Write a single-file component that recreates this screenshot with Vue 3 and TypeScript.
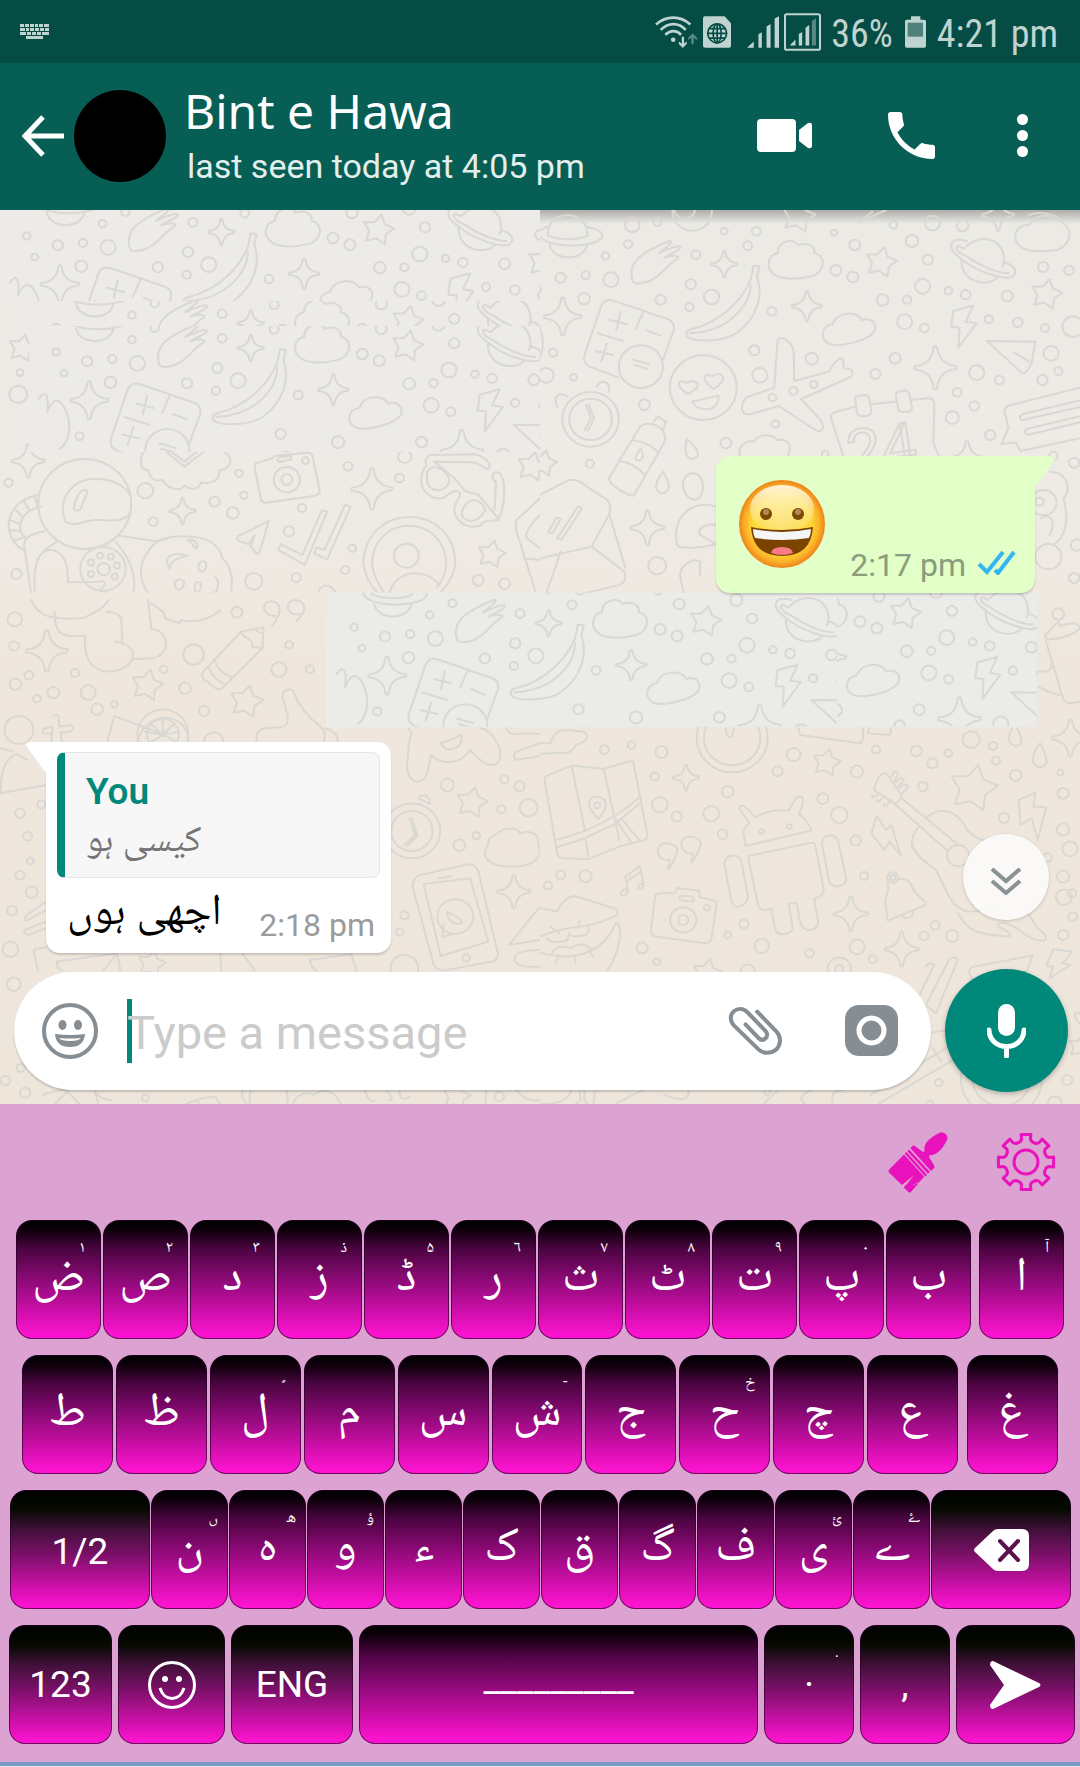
<script setup lang="ts">
interface Key {
  label: string
  name?: string
  hint?: string
  w: number
  fn?: boolean
  apart?: boolean
  icon?: 'smile' | 'back' | 'send'
}
type Dot = [number, number, number]

const letter = (w: number) => (s: string): Key => {
  const [label, hint] = s.split(' ')
  return { label, hint, w }
}

const rows: { id: string; keys: Key[] }[] = [
  {
    id: 'r1',
    keys: [
      ...['ض ۱', 'ص ۲', 'د ۳', 'ز ذ', 'ڈ ۵', 'ر ٦', 'ث ۷', 'ٹ ۸', 'ت ۹', 'پ ۰', 'ب'].map(letter(85)),
      { label: 'ا', hint: 'آ', w: 85, apart: true },
    ],
  },
  {
    id: 'r2',
    keys: [
      ...['ط', 'ظ', 'ل \u00a0\u064b', 'م', 'س', 'ش -', 'ج', 'ح خ', 'چ', 'ع'].map(letter(91)),
      { label: 'غ', w: 91, apart: true },
    ],
  },
  {
    id: 'r3',
    keys: [
      { label: '1/2', w: 140, fn: true },
      ...['ن ں', 'ہ ھ', 'و ؤ', 'ء', 'ک', 'ق', 'گ', 'ف', 'ی ئ', 'ے ۓ'].map(letter(77)),
      { label: '', name: 'Backspace', w: 140, fn: true, icon: 'back' },
    ],
  },
  {
    id: 'r4',
    keys: [
      { label: '123', w: 103, fn: true },
      { label: '', name: 'Emoji', w: 107, fn: true, icon: 'smile' },
      { label: 'ENG', w: 122, fn: true },
      { label: '_________', name: 'Space', w: 399 },
      { label: '·', name: 'Full stop', hint: '.', w: 90, fn: true },
      { label: ',', w: 90, fn: true },
      { label: '', name: 'Send', w: 119, fn: true, icon: 'send' },
    ],
  },
]

/* Wallpaper doodles: every layer is one path built from small shapes. */
const circle = ([x, y, r]: Dot) => `M${x - r},${y}a${r},${r} 0 1 0 ${2 * r},0a${r},${r} 0 1 0 ${-2 * r},0`
const sparkle = ([x, y, r]: Dot) => {
  const q = r * 0.16
  const t = r * 0.08
  return `M${x - t},${y - r}Q${x},${y - r - t} ${x + t},${y - r}Q${x + q},${y - q} ${x + r},${y - t}Q${x + r},${y + t} ${x + r - t},${y + t}Q${x + q},${y + q} ${x + t},${y + r}Q${x},${y + r + t} ${x - t},${y + r}Q${x - q},${y + q} ${x - r},${y + t}Q${x - r},${y - t} ${x - r + t},${y - t}Q${x - q},${y - q} ${x - t},${y - r}Z`
}
const star = ([x, y, r]: Dot) => {
  const pts = Array.from({ length: 10 }, (_, i) => {
    const a = (i * 36 - 78) * (Math.PI / 180)
    const d = i % 2 ? r * 0.55 : r
    return `${(x + d * Math.cos(a)).toFixed(1)},${(y + d * Math.sin(a)).toFixed(1)}`
  })
  return `M${pts.join('L')}Z`
}
const layer = (dots: Dot[], sparks: Dot[], stars: Dot[], extra: string) =>
  [...dots.map(circle), ...sparks.map(sparkle), ...stars.map(star), extra].join('')

const sky = layer(
  [
    [268, 60, 21], [340, 52, 11], [256, 118, 12], [190, 153, 11], [60, 218, 15], [133, 211, 12], [206, 224, 22],
    [128, 281, 17], [350, 284, 15], [438, 238, 15], [498, 276, 22], [434, 306, 12], [452, 149, 13], [603, 122, 13],
    [535, 78, 10], [628, 79, 13], [673, 319, 13], [859, 196, 16], [908, 216, 16], [914, 120, 16], [854, 83, 9],
    [1026, 60, 11], [1080, 108, 18], [1140, 54, 22], [1227, 62, 17], [1126, 164, 15], [1111, 244, 22], [1186, 257, 11],
    [1236, 269, 14], [995, 285, 17], [1066, 284, 12], [1059, 350, 22], [1116, 369, 13], [1303, 343, 12], [1387, 352, 14],
    [1357, 273, 16], [1461, 186, 15], [1536, 196, 14], [1466, 369, 12], [1548, 365, 31], [1484, 445, 22], [1268, 503, 22],
    [1334, 525, 13], [1459, 525, 15], [1505, 499, 12], [974, 507, 15], [1031, 460, 16], [789, 461, 18], [638, 511, 22],
    [622, 436, 15], [38, 443, 12], [293, 485, 64], [-7, 253, 10], [-30, 190, 11],
  ],
  [[535, 178, 38], [775, 303, 44], [66, 335, 55], [1148, 488, 62]],
  [[990, 172, 47], [1470, 268, 47]],
  'M22,92C20,10 140,10 138,92M22,66C-30,80 0,120 90,122C190,120 210,80 138,66M22,92C60,106 110,106 138,92M28,120C40,170 125,170 137,120' +
    'M270,230C250,170 300,140 375,108C395,108 360,130 345,145C365,135 410,115 408,128C400,140 370,150 360,158C380,150 405,150 400,160C370,175 345,225 305,232C290,236 275,236 270,230Z' +
    'M620,182L637,184L630,215C650,270 630,340 570,385C530,410 460,412 430,398C420,385 425,375 440,373C530,350 590,280 612,222ZM612,238C610,300 550,380 435,385' +
    'M690,145C690,110 735,95 750,120C780,110 800,125 797,145C830,150 830,200 790,213C750,225 700,225 680,208C655,190 660,150 690,145Z' +
    'M1232,130C1270,85 1345,95 1347,160C1350,170 1345,180 1342,184M1224,168C1224,240 1310,245 1330,215M1240,108C1190,95 1180,125 1215,155C1270,205 1350,225 1372,215C1390,200 1375,178 1345,172M1228,130C1200,110 1205,140 1235,152C1280,185 1330,205 1362,205' +
    'M850,358C860,320 920,315 935,345C965,335 980,360 970,380C950,410 870,425 845,418C810,410 815,360 850,358Z' +
    'M1200,318L1258,302L1236,350L1267,355L1215,428L1218,368L1194,366Z' +
    'M228,518L145,485Q122,474 130,448L178,302Q188,280 212,286L370,342Q394,352 388,376L358,462M202,345L252,358M234,322L222,376M162,438L212,450M194,416L178,470M310,376L350,392M300,320L278,372M168,385L240,408M275,480L312,492M270,464L316,478' +
    'M1298,408L1438,410L1428,470Q1410,520 1392,497ZM1375,442L1420,470M-80,330C-60,300 -50,320 -56,370C-40,330 -20,320 0,370C20,420 0,470 -20,480',
)

const town = layer(
  [
    [474, 548, 97], [147, 643, 82], [147, 643, 62], [675, 578, 11], [736, 558, 12], [795, 538, 11], [684, 657, 11],
    [303, 599, 16], [540, 714, 16], [97, 517, 10], [18, 511, 22], [145, 776, 12], [340, 1082, 26], [1211, 562, 13],
    [1261, 603, 14], [1197, 638, 19], [1307, 690, 15], [1491, 752, 12], [1551, 773, 15], [1558, 1020, 17],
    [1551, 1119, 15], [828, 748, 10], [1462, 893, 38], [1450, 890, 12], [1476, 1055, 38], [442, 20, 57], [420, 12, 30],
  ],
  [[312, 968, 50], [1240, 760, 50], [1330, 30, 46]],
  [[750, 34, 50], [10, 775, 40]],
  'M430,568C390,540 400,520 428,534C445,520 470,535 452,552ZM505,552C465,525 475,500 502,514C525,495 545,520 520,540ZM442,590L518,572C525,620 460,625 442,590Z' +
    'M690,405C700,390 738,410 737,450L738,528L840,500C850,470 880,450 880,465L882,490C920,490 910,515 890,522L758,582L815,645C830,670 815,685 800,675L693,603L610,628C580,630 580,600 600,577L680,548Z' +
    'M134,600L148,640L130,676M142,600L157,642L138,678M50,605C35,570 60,560 80,575M165,545C180,520 205,530 200,560' +
    'M200,820L290,665C310,645 370,660 362,710L272,872C260,875 200,840 200,820ZM268,705C300,710 330,725 345,745M232,768C260,772 290,790 305,812M330,650L342,634L366,650L358,672M292,732C270,760 275,768 290,766C302,760 300,745 292,732Z' +
    'M425,702C470,740 465,760 440,762C418,755 422,730 425,702ZM358,800C380,840 380,862 352,865C325,855 340,820 358,800ZM442,805C485,805 480,880 450,885C410,880 400,810 442,805Z' +
    'M580,752C575,720 600,705 620,710C640,680 680,690 688,705C730,700 730,730 720,752' +
    'M880,752L845,640Q842,628 856,622L915,605M958,598L1035,590M1078,584L1130,580Q1145,582 1145,600L1142,712L1158,752M915,580Q915,572 925,572L945,570Q954,572 956,582L962,618Q962,630 950,632L932,634Q922,632 920,622ZM1033,570Q1033,560 1042,560L1062,556Q1070,558 1072,566L1080,608Q1080,618 1070,620L1052,620Q1042,620 1040,612Z' +
    'M1568,548L1360,602Q1345,610 1350,625L1360,668L1340,718L1380,712L1395,738L1568,700M1568,586L1400,628Q1388,636 1398,646L1568,606M1568,634L1412,672Q1402,682 1416,690L1568,652' +
    'M0,870L70,832Q92,818 115,830L195,885Q208,900 202,925L150,1025L0,1060M60,1040L20,1160M150,1025L245,1100Q255,1130 230,1140L130,1165M202,930L248,1090M110,905L122,910L62,1005L50,1000ZM48,938L60,942L36,985L24,982Z' +
    'M512,905C440,880 380,940 398,1020C410,1035 470,1028 512,1018M512,960C480,955 455,970 465,990L512,1018M465,1110L465,1070C450,1055 400,1080 408,1120C415,1160 420,1180 430,1190M1480,800C1530,800 1545,850 1520,880C1540,960 1520,1000 1490,1020M1456,940C1480,920 1500,950 1480,990' +
    'M925,52L1005,15M925,52L965,20M1420,30C1440,20 1500,20 1520,55C1550,80 1540,120 1500,135C1450,142 1400,140 1385,115C1370,80 1390,60 1420,60C1440,30 1470,25 1490,42',
)

const spaceman = layer(
  [
    [246, 897, 135], [299, 1092, 66], [301, 1093, 18], [291, 1052, 9], [322, 1055, 9], [340, 1082, 9], [333, 1115, 9],
    [264, 1107, 9], [264, 1072, 9], [25, 833, 12], [422, 857, 23], [445, 950, 13], [623, 890, 15], [676, 924, 17],
    [708, 871, 11], [694, 805, 11], [833, 824, 38], [833, 824, 16], [887, 767, 10], [1010, 784, 13], [1160, 819, 13],
    [1175, 755, 19], [877, 909, 12], [839, 979, 15], [1023, 1030, 11], [1002, 1095, 12], [860, 1118, 13], [737, 1129, 25],
    [1180, 1052, 36], [1389, 1126, 16], [1465, 1136, 16], [48, 1107, 15], [41, 1185, 12], [789, 1200, 24], [858, 1195, 22],
    [53, 568, 26], [58, 503, 10],
  ],
  [[82, 768, 48], [530, 918, 38], [1080, 852, 60]],
  [[1427, 1048, 42], [1545, 785, 45], [65, 430, 42]],
  'M190,950C165,880 210,825 270,822C330,820 360,840 378,870M190,950C220,970 250,940 300,945C340,950 370,945 380,920M215,905C220,870 240,850 250,855C260,860 240,890 235,912C225,920 212,918 215,905Z' +
    'M110,870C50,880 20,930 26,970C30,1005 50,1025 68,1035M120,905C70,915 50,950 62,985L75,1000M100,872L110,905M70,890L86,918M45,915L66,935M30,945L58,958M28,975L60,978M40,1008L66,998M130,978C80,990 70,1000 70,1020L95,1200M105,1200C90,1080 110,1030 155,1035C200,1050 195,1100 198,1132L290,1130C310,1125 310,1140 288,1158C320,1160 325,1180 315,1200M335,1010C380,1060 400,1120 385,1170L362,1190M345,992L450,1008L485,1002M130,1035L165,1010' +
    'M430,1040C450,1000 500,990 550,995C600,995 640,1020 645,1060C680,1090 680,1150 660,1200M430,1040C400,1080 405,1130 430,1165L440,1200M486,1075C480,1050 510,1040 545,1052C520,1060 500,1060 492,1092ZM578,1095C570,1075 590,1060 598,1075C602,1095 590,1105 578,1095ZM510,1148C500,1125 525,1115 534,1130C536,1150 520,1160 510,1148ZM566,1155C562,1135 575,1125 582,1135C586,1155 575,1170 566,1155ZM600,1172L628,1160Q640,1130 625,1115M545,1005C570,1000 580,1025 570,1030Z' +
    'M485,742L535,785L590,742M500,742L535,770L570,742M415,742C400,780 415,795 432,797C435,825 455,830 470,824C490,855 525,860 535,842C560,860 580,850 584,832C620,840 640,820 636,797C680,790 675,750 650,742' +
    'M760,770L742,775Q738,780 742,800L758,885Q762,895 775,893L915,872Q930,868 928,855L908,755Q905,745 895,743L800,752L790,760ZM805,765Q805,760 812,757L840,753Q848,755 846,762L810,772Z' +
    'M1238,780C1230,760 1250,745 1260,750L1380,748C1420,760 1430,785 1415,792C1400,790 1400,775 1370,772L1260,770L1320,820L1350,858L1390,870L1446,940M1238,780C1200,840 1240,885 1285,880C1300,870 1320,850 1335,862C1345,880 1310,890 1322,930C1340,970 1390,975 1405,950L1446,945C1470,900 1470,810 1445,802C1420,805 1430,825 1440,830L1436,915M1240,800C1260,770 1300,800 1305,825C1300,865 1245,865 1240,830ZM1345,910C1370,865 1400,890 1410,915C1380,965 1345,950 1340,925Z' +
    'M780,948L690,995Q685,1005 700,1010L722,1018L740,990L728,1022L745,1048Q755,1045 760,1020ZM935,915L950,920L885,1080L808,1035L815,1018L878,1050ZM1003,898L1018,905L950,1063L912,1045L920,1026L942,1035Z' +
    'M1055,1075C1060,890 1320,890 1322,1075C1320,1110 1300,1140 1280,1162M1055,1075C1060,1110 1075,1140 1095,1162M1080,1075C1085,925 1290,925 1296,1075C1295,1100 1290,1120 1270,1145M1080,1075C1082,1110 1100,1140 1115,1162M1132,1162C1150,1090 1240,1090 1275,1140M1568,880L1500,945Q1495,960 1500,980L1555,1160M1568,930Q1520,980 1530,1000L1568,1030M1520,1060L1568,1065M975,1162C950,1120 910,1150 930,1185L970,1200',
)

const garden = layer(
  [
    [43, 58, 21], [41, 138, 14], [84, 226, 13], [45, 253, 17], [155, 278, 17], [107, 296, 11], [218, 219, 12], [256, 278, 22],
    [282, 328, 17], [332, 313, 10], [475, 208, 11], [537, 265, 17], [562, 164, 30], [688, 37, 16], [810, 209, 22],
    [840, 135, 11], [900, 208, 12], [593, 333, 15], [120, 614, 12], [58, 640, 14], [80, 709, 13], [88, 783, 10],
    [58, 826, 13], [92, 877, 17], [35, 932, 14], [30, 1048, 23], [40, 1153, 20], [55, 390, 42], [473, 403, 74],
    [473, 403, 46], [620, 425, 28], [1299, 555, 19], [1465, 538, 12], [1508, 559, 15], [1456, 628, 12], [1535, 623, 26],
    [1334, 736, 17], [1383, 707, 11], [1196, 693, 82], [1196, 693, 60], [1174, 946, 12], [1161, 997, 11],
    [1322, 950, 52], [1354, 1074, 11], [1174, 1105, 40], [16, 1442, 14], [73, 1478, 15], [60, 1404, 12], [422, 1494, 10],
    [1450, 1490, 14], [780, 1495, 56],
  ],
  [[136, 153, 60], [1492, 875, 48]],
  [[427, 256, 48], [715, 305, 50], [1370, 608, 47], [440, 1092, 42], [1325, 1490, 42]],
  'M90,0C110,50 150,60 240,55C320,20 310,0 316,0M158,35C160,110 180,110 248,108C240,180 270,215 320,215C390,210 420,140 335,125M355,125L352,55Q340,35 310,35M430,0L440,88C490,90 500,160 445,175L388,178M440,10C460,30 480,30 480,55L520,70L528,60C560,70 610,60 640,30' +
    'M765,82L700,95L588,218Q585,230 592,238L630,268Q640,270 648,262L762,145ZM700,95Q705,110 720,115Q735,125 732,140L762,145M742,88Q750,100 766,100M622,178Q632,215 672,232M605,200Q615,235 655,255' +
    'M790,80L810,45C820,0 780,-5 768,15C760,40 790,50 800,48M860,65L880,40C895,0 850,-10 838,10C830,35 850,48 870,42' +
    'M312,422L332,348L480,405M400,425C420,330 540,330 548,420M473,360L473,405M440,372L473,405L420,395M505,372L473,405L520,395M440,425L473,405L510,425' +
    'M745,422Q740,390 770,385L815,382Q840,380 835,345L820,290Q825,260 850,272C860,300 880,340 930,380Q950,395 940,425M945,385Q980,395 982,425' +
    'M155,350Q160,340 170,348L172,380L208,376Q220,385 205,395L175,398L180,425M150,425L148,402L125,400Q120,388 135,384L152,380ZM50,465L80,480M48,462C10,480 0,530 2,580L134,555M0,445L40,455' +
    'M1185,385L1195,400Q1185,430 1182,500C1185,560 1240,560 1245,500L1252,465C1290,500 1340,490 1365,450L1385,470C1420,510 1460,500 1452,450Q1430,390 1395,385M1280,430Q1310,420 1340,405Q1345,440 1310,448Q1290,450 1280,430ZM1568,430L1500,455Q1485,465 1498,480L1568,468M1470,385Q1480,410 1510,400L1568,402' +
    'M1188,655L1205,705L1175,735M1196,655L1212,708L1182,738M1215,595C1225,575 1250,590 1248,612Z' +
    'M1440,705C1460,680 1500,680 1510,700C1540,690 1568,700 1562,735C1580,760 1560,795 1500,800C1420,805 1390,770 1418,735C1415,715 1430,705 1440,705Z' +
    'M1220,825L1360,793Q1380,792 1388,812L1446,1060Q1445,1080 1430,1085L1290,1112Q1265,1112 1258,1090L1198,860Q1198,835 1220,825ZM1230,852L1365,835L1418,1025L1280,1068ZM1275,835L1310,828M1288,975L1285,1012L1315,1002M1300,935C1295,960 1320,980 1342,968L1332,955L1315,945Z' +
    'M134,905L85,940Q65,955 78,962L134,930M134,965L72,990Q65,1000 85,1005L134,985M110,1112L98,1055Q98,1045 115,1045L134,1042M165,1085L340,1060L350,1112M340,1060L300,1112M168,1085Q160,1100 180,1112M640,1060L642,1112M705,1062L740,1112M900,1080L1020,1062L1035,1112M900,1085Q905,1105 920,1112M1568,920L1478,1035L1568,1020M1568,1050Q1490,1050 1495,1080Q1500,1105 1568,1100' +
    'M125,1487Q130,1478 200,1468L160,1512M195,1475L230,1512M275,1470L285,1512M275,1475Q290,1500 325,1500M540,1512Q600,1488 625,1492L640,1512M570,1500L578,1512M705,1470C700,1490 705,1500 715,1512M850,1512Q870,1470 910,1485Q960,1450 990,1512M1060,1470Q1070,1512 1090,1502M1120,1470Q1150,1500 1130,1502M1160,1470Q1160,1510 1190,1490M1410,1512L1412,1470M1500,1470Q1530,1510 1568,1500',
)

const band = layer(
  [
    [187, 449, 13], [266, 436, 11], [353, 456, 18], [333, 530, 12], [397, 650, 15], [348, 614, 23], [545, 575, 17],
    [497, 641, 23], [530, 703, 14], [690, 514, 15], [736, 464, 20], [821, 596, 16], [869, 645, 24], [917, 722, 15],
    [920, 515, 18], [976, 449, 12], [1093, 453, 16], [1140, 490, 15], [1186, 460, 11], [1112, 560, 14], [1252, 419, 25],
    [1315, 438, 12], [1324, 482, 12], [1381, 526, 17], [1347, 654, 15], [1511, 518, 9], [1519, 580, 16], [1519, 689, 18],
    [1539, 747, 22], [1519, 830, 18], [1521, 892, 23], [1547, 950, 13], [1519, 1005, 15], [1473, 773, 13], [60, 825, 13],
    [132, 829, 18], [23, 857, 12], [941, 828, 12], [592, 972, 13], [545, 1005, 10], [644, 1038, 21], [783, 1060, 13],
    [297, 1044, 16], [339, 1085, 10], [921, 1041, 22], [966, 1078, 12], [1115, 1008, 13], [1147, 976, 13], [1197, 1008, 18],
    [869, 1107, 34], [869, 1107, 12], [558, 414, 103], [558, 414, 82], [416, 960, 38], [416, 960, 15], [485, 923, 9],
    [643, 695, 7], [724, 680, 7], [166, 616, 9], [1024, 833, 16], [1024, 833, 8], [1214, 767, 32], [603, 1115, 21],
    [1340, 1435, 118], [1340, 1435, 84], [1158, 1448, 11], [1531, 1440, 15], [1495, 1510, 20], [1132, 1515, 12],
    [1505, 42, 17], [1545, 880, 12], [660, 1476, 9],
  ],
  [[424, 533, 38], [902, 942, 50], [1050, 1048, 50], [1540, 414, 54]],
  [[832, 488, 42], [1258, 565, 72], [485, 1120, 44], [1568, 1340, 34]],
  'M14,545Q10,530 25,525L92,497L185,507L260,484Q270,482 272,492L312,705Q312,718 298,722L235,738L142,777L65,775Q52,770 50,762ZM92,497L130,690M185,507L230,720M48,720L125,695Q230,650 290,590M50,742L130,715L218,672L290,610M218,655L265,728M235,655L288,720M132,715L140,770M170,658L145,625Q135,590 166,590Q195,595 190,625Z' +
    'M395,765C385,790 375,810 370,805C375,795 378,785 376,780C340,785 330,740 360,730C395,730 405,745 395,765ZM463,745C453,770 443,790 438,785C443,775 446,765 444,760C408,765 398,720 428,710C463,710 473,725 463,745ZM248,830L290,798L300,850M248,830L255,872M250,845L293,815M255,872C245,860 230,880 235,885C245,890 260,880 255,872M300,850C290,848 280,862 288,866C298,866 302,860 300,850' +
    'M597,738L590,700Q590,685 608,668L580,630Q578,610 595,620L625,652Q670,625 722,632L745,592Q760,585 764,600Q762,625 752,642Q780,665 788,692ZM605,768L790,728Q798,728 800,740L824,870Q820,892 796,896L808,970Q800,992 775,990Q760,985 755,965L745,908L722,912L734,985Q730,1002 705,1003Q685,1003 682,985L672,926L650,930Q635,928 632,910L605,775ZM535,790Q540,765 565,767Q582,770 585,785L604,890Q602,915 575,921Q560,920 555,900ZM818,730Q820,707 845,706Q862,710 866,725L890,840Q885,858 860,860Q845,858 840,845Z' +
    'M355,880L345,880Q335,882 334,892L322,990Q322,1005 335,1010L480,1030Q495,1028 498,1015L512,915Q512,903 500,900L465,892L460,872L398,864L392,880ZM405,892Q405,888 412,888L440,890Q450,895 446,905L412,902Q405,900 405,892Z' +
    'M978,648L1005,690L1020,675L1048,768L1015,725L1000,750L962,700ZM1390,600L1438,578L1433,620L1470,622L1445,720L1428,655L1395,675ZM1490,1048L1545,1055L1518,1090L1540,1095L1480,1135L1490,1100L1470,1098Z' +
    'M1008,850C1020,870 1000,890 1002,910C1010,940 1005,960 1010,962L1120,915C1130,905 1090,890 1080,860C1070,835 1050,835 1038,838M1048,945Q1060,960 1080,950L1082,935' +
    'M970,570Q980,520 1005,520L1050,585Q1050,600 1030,612L970,570M1020,530Q1030,505 1040,520L1030,545M1035,545Q1050,525 1056,540L1040,560M1045,562Q1060,545 1070,560L1052,580M985,580Q960,600 965,585M1000,588Q980,615 978,600M1018,600Q1000,630 998,612M1050,595L1215,735M1030,612L1185,755M1120,655C1180,600 1230,660 1240,690Q1270,720 1290,720M1100,680C1060,730 1080,760 1150,810C1180,870 1190,920 1240,935Q1280,935 1320,920M1215,940C1240,1000 1290,1005 1360,1010Q1380,1005 1330,980Q1330,965 1350,970C1400,980 1410,1025 1465,1022Q1480,1010 1445,985L1410,930' +
    'M0,925L50,935Q70,890 100,888L215,925Q235,935 215,950Q160,975 120,980Q60,985 0,1010M0,1058Q80,1080 130,1060Q190,1040 220,970Q235,970 232,1010Q225,1070 195,1112M20,1015Q30,1035 80,1020L85,1000Q90,1015 130,1005Q145,1000 140,980M35,1060Q50,1030 90,1045Q120,1020 155,1050M45,1090L55,1065M103,1090L103,1065M155,1070L140,1050M30,980L55,1000M115,960L110,985' +
    'M0,430L30,430Q40,390 75,390L125,395Q145,405 130,425L105,435Q90,465 60,458L0,462M540,385Q540,410 550,412Q562,410 562,385M750,385L755,405L930,430Q940,425 938,385M955,385L952,400L1015,405Q1020,400 1018,385' +
    'M1385,385C1405,420 1400,438 1380,438C1355,430 1360,410 1370,385M1452,430C1480,485 1475,500 1450,502C1420,495 1430,460 1452,430Z' +
    'M1120,1100Q1128,1085 1145,1095L1095,1200M1195,1075Q1205,1068 1213,1080L1150,1240L1120,1215L1190,1075M1245,1115Q1245,1105 1260,1100L1430,1067L1415,1112L1380,1140M1245,1115L1260,1150' +
    'M1465,108L1505,65L1510,78Q1560,60 1568,85Q1540,115 1475,118ZM1468,120L1520,300Q1530,315 1568,305M1443,258Q1480,280 1510,285M1443,215Q1490,220 1485,190' +
    'M960,1485L1185,1340M985,1510L1200,1380M1130,1300L1180,1290M1140,1345L1165,1385M690,1470L650,1512M770,1512Q740,1490 790,1470M850,1512Q840,1470 880,1470M430,1470Q440,1515 360,1485M0,1512Q80,1515 90,1470M115,1470L118,1500L105,1512M130,1470L128,1500L138,1512M160,1470L155,1512M220,1512Q260,1490 300,1470M1568,1240Q1545,1230 1558,1260L1568,1270',
)

const gear = (() => {
  const pts: string[] = []
  for (let k = 0; k < 8; k++) {
    for (const [deg, r] of [[-17, 21], [-11, 23], [-10, 28], [10, 28], [11, 23], [17, 21]]) {
      const a = ((k * 45 + deg) * Math.PI) / 180
      pts.push(`${(30 + r * Math.sin(a)).toFixed(1)},${(30 - r * Math.cos(a)).toFixed(1)}`)
    }
  }
  return `M${pts.join('L')}Z`
})()

const keyboardBlocks = [
  [20, 24, 4], [25, 24, 4], [30, 24, 4], [35, 24, 3], [39, 24, 4], [44, 24, 5],
  [20, 28, 5], [26, 28, 3], [30, 28, 4], [35, 28, 4], [40, 28, 4], [45, 28, 4],
  [20, 32, 6], [27, 32, 4], [32, 32, 4], [37, 32, 4], [42, 32, 7],
  [26, 36, 17],
]
</script>

<template>
  <main class="phone">
    <div class="status">
      <svg class="kbd" viewBox="20 24 29 15" aria-hidden="true">
        <rect v-for="(k, i) in keyboardBlocks" :key="i" :x="k[0]" :y="k[1]" :width="k[2]" height="3" />
      </svg>
      <svg class="wifi" viewBox="162 45 128 97" aria-hidden="true">
        <g fill="none" stroke="#bfd3d0" stroke-width="8">
          <path d="M164,71C194,43 238,43 268,71" />
          <path d="M178,87C202,64 232,64 254,87" />
          <path d="M192,102C208,87 226,87 240,102" />
        </g>
        <circle cx="216" cy="117" r="7" />
        <path d="M242,108h7v20l8,-6v8l-12,12l-12,-12v-8l9,6Z" />
        <path d="M271,131h7v-20l10,7v-8l-13,-12l-13,12v8l9,-7Z" opacity=".45" />
      </svg>
      <svg class="sim" viewBox="306 47 83 94" aria-hidden="true">
        <path d="M312,47H370L389,68V135Q389,141 383,141H312Q306,141 306,135V53Q306,47 312,47Z" />
        <g fill="none" stroke="#054c44" stroke-width="5">
          <circle cx="348" cy="98" r="28" />
          <ellipse cx="348" cy="98" rx="12" ry="28" />
          <path d="M320,98H376M324,84H372M324,112H372M348,70V126" />
        </g>
      </svg>
      <svg class="signal" viewBox="440 47 95 94" aria-hidden="true">
        <path d="M440,141L460,122V141ZM474,101L484,95V141H474ZM498,78L510,70V141H498ZM522,54L535,47V141H522Z" />
      </svg>
      <svg class="boxed" viewBox="551 39 110 112" aria-hidden="true">
        <rect x="554" y="42" width="104" height="106" rx="5" fill="none" stroke="#bfd3d0" stroke-width="6" />
        <path d="M568,135L585,117V135ZM595,101L605,95V135H595ZM615,82L626,74V135H615Z" />
        <path d="M634,62L646,54V135H634Z" opacity=".45" />
      </svg>
      <span class="percent">36%</span>
      <svg class="battery" viewBox="912 47 63 94" aria-hidden="true">
        <path d="M930,47H958V57H970Q975,57 975,62V136Q975,141 970,141H917Q912,141 912,136V62Q912,57 917,57H930Z" />
        <rect x="920" y="66" width="46" height="42" fill="#4d817a" />
      </svg>
      <span class="clock">4:21 pm</span>
    </div>

    <header class="bar">
      <button class="icon-btn" type="button" aria-label="Back">
        <svg class="arrow" viewBox="0 0 42 42"><path d="M21,2L3,21L21,40M3,21H42" /></svg>
      </button>
      <span class="avatar"></span>
      <div class="who">
        <h1>Bint e Hawa</h1>
        <p>last seen today at 4:05 pm</p>
      </div>
      <div class="actions">
        <button class="icon-btn" type="button" aria-label="Video call">
          <svg class="video" viewBox="0 0 55 33"><path d="M4,0H35Q39,0 39,4V29Q39,33 35,33H4Q0,33 0,29V4Q0,0 4,0ZM42,11L51,4Q55,3 55,6V27Q55,30 51,29L42,22Z" /></svg>
        </button>
        <button class="icon-btn voice" type="button" aria-label="Voice call">
          <svg class="call" viewBox="3 3 18 18"><path d="M6.62 10.79c1.44 2.83 3.76 5.14 6.59 6.59l2.2-2.2c.27-.27.67-.36 1.02-.24 1.12.37 2.33.57 3.57.57.55 0 1 .45 1 1V20c0 .55-.45 1-1 1-9.39 0-17-7.61-17-17 0-.55.45-1 1-1h3.5c.55 0 1 .45 1 1 0 1.25.2 2.45.57 3.57.11.35.03.74-.25 1.02l-2.2 2.2z" /></svg>
        </button>
        <button class="icon-btn" type="button" aria-label="More options">
          <svg class="more" viewBox="0 0 11 43"><circle cx="5.5" cy="5.5" r="5.5" /><circle cx="5.5" cy="21.500" r="5.5" /><circle cx="5.5" cy="37.500" r="5.5" /></svg>
        </button>
      </div>
    </header>

    <section class="chat">
      <svg class="wallpaper" viewBox="0 210 1080 894" preserveAspectRatio="xMidYMin slice" aria-hidden="true">
        <defs>
          <linearGradient id="paper" x1="0" y1="0" x2="0" y2="1">
            <stop offset="0" stop-color="#ebeae5" />
            <stop offset=".3" stop-color="#eeebe6" />
            <stop offset=".5" stop-color="#efe7dd" />
            <stop offset="1" stop-color="#eee6db" />
          </linearGradient>
          <linearGradient id="shade" x1="0" y1="0" x2="0" y2="1">
            <stop offset="0" stop-color="#000" stop-opacity=".26" />
            <stop offset="1" stop-color="#000" stop-opacity="0" />
          </linearGradient>
          <path id="sky" :d="sky" />
          <clipPath id="c1"><rect x="-1568" y="15" width="1568" height="273" /></clipPath>
          <clipPath id="c2"><rect x="-1483" y="288" width="1483" height="75" /></clipPath>
          <clipPath id="c3"><rect x="-1483" y="363" width="1483" height="378" /></clipPath>
          <clipPath id="c4"><rect x="-621" y="1163" width="1483" height="402" /></clipPath>
          <clipPath id="c5"><rect x="862" y="1163" width="581" height="402" /></clipPath>
          <clipPath id="c6"><rect x="-1568" y="741" width="1568" height="422" /><rect x="-1568" y="363" width="85" height="378" /></clipPath>
          <clipPath id="c7"><path d="M-1568,1163H-621V1565H0V2800H-1568Z" /></clipPath>
          <clipPath id="c8"><path d="M0,1565H1443V1163H1580V2800H0Z" /></clipPath>
          <clipPath id="c9"><rect x="0" y="0" width="1580" height="1163" /></clipPath>
        </defs>
        <rect y="210" width="1080" height="894" fill="url(#paper)" />
        <rect x="540" y="210" width="540" height="14" fill="url(#shade)" />
        <rect y="210" width="540" height="91" fill="#ecebe7" />
        <rect x="29" y="301" width="511" height="151" fill="#ecebe7" />
        <rect x="326" y="593" width="711" height="134" fill="#ebebe7" />
        <g class="doodle" transform="translate(540 205) scale(.3444 .3333)">
          <g clip-path="url(#c1)"><use href="#sky" x="-1460" y="-97" /></g>
          <g clip-path="url(#c2)"><use href="#sky" x="-1375" y="177" /></g>
          <g clip-path="url(#c3)"><use href="#sky" x="-1375" y="251" /></g>
          <g clip-path="url(#c4)"><use href="#sky" x="-510" y="1077" /></g>
          <g clip-path="url(#c5)"><use href="#sky" x="70" y="1054" /></g>
          <g clip-path="url(#c6)"><path :d="spaceman" transform="translate(-1568 0)" /></g>
          <g clip-path="url(#c7)"><path :d="garden" transform="translate(-1568 1185)" /></g>
          <g clip-path="url(#c8)"><path :d="band" transform="translate(0 1185)" /></g>
          <g clip-path="url(#c9)">
            <use href="#sky" />
            <path :d="town" />
            <text x="900" y="805" font-size="180" transform="rotate(-8 900 805)">24</text>
          </g>
        </g>
      </svg>

      <article class="bubble out">
        <svg class="tail" viewBox="0 0 20 31" aria-hidden="true"><path d="M0,0H17Q21,1 19,5L0,31Z" fill="#e1ffc7" /></svg>
        <svg class="grin" viewBox="0 0 86 88" role="img" aria-label="Grinning face">
          <defs>
            <radialGradient id="face" cx=".5" cy=".5" r=".5">
              <stop offset="0" stop-color="#fbe06a" />
              <stop offset=".68" stop-color="#fdd835" />
              <stop offset=".86" stop-color="#fbb12a" />
              <stop offset="1" stop-color="#ee8318" />
            </radialGradient>
            <linearGradient id="gloss" x1="0" y1="0" x2="0" y2="1">
              <stop offset="0" stop-color="#fffbe6" stop-opacity=".9" />
              <stop offset="1" stop-color="#fffbe6" stop-opacity="0" />
            </linearGradient>
          </defs>
          <ellipse cx="43" cy="44" rx="43" ry="44" fill="url(#face)" />
          <ellipse cx="43" cy="29" rx="32" ry="24" fill="url(#gloss)" />
          <circle cx="27" cy="34" r="6" fill="#7a4a00" />
          <circle cx="59" cy="34" r="6" fill="#7a4a00" />
          <circle cx="27" cy="32" r="3" fill="#b08a58" />
          <circle cx="59" cy="32" r="3" fill="#b08a58" />
          <path d="M12,47Q43,53 74,47Q72,76 43,76Q14,76 12,47Z" fill="#7a4300" />
          <path d="M14,49Q43,55 72,49Q72,54 70,58Q43,62 16,58Q14,54 14,49Z" fill="#f6f6f6" />
          <path d="M32,73Q33,67 43,67Q53,67 54,73Q43,77 32,73Z" fill="#f87a85" />
        </svg>
        <time>2:17 pm</time>
        <svg class="ticks" viewBox="0 0 39 25" aria-label="Read" role="img"><path d="M2,14L10,22L26,2M18,20L21,23L37,2" /></svg>
      </article>

      <article class="bubble in">
        <svg class="tail" viewBox="0 0 20 31" aria-hidden="true"><path d="M20,0H3Q-1,1 1,5L20,31Z" fill="#fff" /></svg>
        <blockquote>
          <strong>You</strong>
          <span lang="ur">کیسی ہو</span>
        </blockquote>
        <div class="line">
          <p lang="ur">اچھی ہوں</p>
          <time>2:18 pm</time>
        </div>
      </article>

      <button class="jump" type="button" aria-label="Scroll to latest">
        <svg viewBox="0 0 32 28"><path d="M2,2L16,14L30,2M2,14L16,26L30,14" /></svg>
      </button>

      <form class="composer" @submit.prevent>
        <div class="pill">
          <button class="icon-btn" type="button" aria-label="Emoji">
            <svg class="emoji" viewBox="0 0 56 56">
              <circle cx="28" cy="28" r="26" fill="none" stroke="#868e94" stroke-width="4" />
              <ellipse cx="20.500" cy="22" rx="4" ry="5" /><ellipse cx="36" cy="22" rx="4" ry="5" />
              <path d="M13,31Q28,33 43,31Q42,44 28,44Q14,44 13,31ZM17,35Q19,38 28,38Q37,38 39,35Q28,36 17,35Z" fill-rule="evenodd" />
            </svg>
          </button>
          <input type="text" placeholder="Type a message" aria-label="Type a message" />
          <button class="icon-btn" type="button" aria-label="Attach">
            <svg class="clip" viewBox="544 166 162 150"><path d="M630,183L688,243C704,260 700,282 688,296C672,310 648,310 634,296L560,224C548,212 548,192 560,182C572,172 588,172 600,184L656,242C662,250 660,258 656,262C648,270 640,268 634,262L595,221" /></svg>
          </button>
          <button class="icon-btn" type="button" aria-label="Camera">
            <svg class="camera" viewBox="0 0 53 51"><rect width="53" height="51" rx="14" /><circle cx="26.500" cy="25.500" r="12.500" fill="none" stroke="#fff" stroke-width="5" /></svg>
          </button>
        </div>
        <button class="mic" type="button" aria-label="Record voice message">
          <svg viewBox="0 0 39 54"><rect x="11" y="0" width="17" height="32" rx="8.500" fill="#fff" /><path d="M2,26C3,48 36,48 37,26M19.500,43V52" fill="none" stroke="#fff" stroke-width="5" stroke-linecap="round" /></svg>
        </button>
      </form>
    </section>

    <section class="keyboard" aria-label="Keyboard">
      <div class="tools">
        <button class="icon-btn" type="button" aria-label="Themes">
          <svg class="brush" viewBox="1009 545 177 181">
            <path d="M1162,547C1178,543 1190,557 1183,570C1168,598 1152,615 1131,614C1128,625 1140,628 1147,650L1136,661L1075,593L1083,584C1098,590 1110,607 1117,603C1113,582 1125,566 1162,547Z" />
            <path d="M1071,597L1133,664L1127,669L1066,602ZM1063,604L1124,672L1119,677L1058,609Z" />
            <path d="M1056,612L1116,678L1100,695L1056,712L1084,674L1050,702L1012,666Q1008,660 1012,656ZM1099,698L1077,722Q1073,727 1068,722L1055,709L1082,682L1062,708Z" />
          </svg>
        </button>
        <button class="icon-btn" type="button" aria-label="Settings">
          <svg class="gear" viewBox="0 0 60 60"><path :d="gear" /><circle cx="30" cy="30" r="12" /></svg>
        </button>
      </div>
      <div v-for="row in rows" :key="row.id" class="keys" :class="row.id">
        <button
          v-for="(k, i) in row.keys"
          :key="i"
          type="button"
          class="key"
          :class="{ fn: k.fn, apart: k.apart, space: k.name === 'Space' }"
          :style="{ flexGrow: k.w - 2 }"
          :aria-label="k.name || k.label"
        >
          <svg v-if="k.icon === 'smile'" class="k-smile" viewBox="0 0 48 48"><circle cx="24" cy="24" r="22.500" /><circle cx="17" cy="18" r="3" class="solid" /><circle cx="31" cy="18" r="3" class="solid" /><path d="M12,27C16,41 32,41 36,27" /></svg>
          <svg v-else-if="k.icon === 'back'" class="k-back" viewBox="0 0 55 42"><path d="M19,2Q21,0 24,0H48Q55,0 55,7V35Q55,42 48,42H24Q21,42 19,40L1,23Q-1,21 1,19Z" fill="#fff" /><path d="M26,12L44,31M44,12L26,31" stroke="#5c104e" stroke-width="4" stroke-linecap="round" /></svg>
          <svg v-else-if="k.icon === 'send'" class="k-send" viewBox="0 0 51 48"><path d="M3,0L49,22Q52,24 49,26L3,48Q0,48 0,44L14,24L0,4Q0,0 3,0Z" fill="#fff" /></svg>
          <span v-else class="glyph">{{ k.label }}</span>
          <small v-if="k.hint">{{ k.hint }}</small>
        </button>
      </div>
    </section>
    <div class="edge"></div>
  </main>
</template>

<style>
body {
  margin: 0;
}
</style>

<style scoped>
* {
  box-sizing: border-box;
}
.phone {
  font-family: Roboto, 'Noto Naskh Arabic', 'Noto Sans Arabic', 'DejaVu Sans', sans-serif;
  overflow: hidden;
}
svg {
  display: block;
  flex: none;
}
button {
  border: 0;
  padding: 0;
  background: none;
  font: inherit;
  cursor: pointer;
}
h1,
p,
blockquote {
  margin: 0;
  font-weight: 400;
}
.icon-btn {
  display: grid;
  place-items: center;
  flex: none;
}

.status {
  display: flex;
  align-items: center;
  height: 63px;
  padding: 0 22px 0 20px;
  background: #054c44;
  color: #bfd3d0;
  fill: #bfd3d0;
  font-family: 'Roboto Condensed', Roboto, sans-serif;
  font-size: 38px;
  line-height: 44px;
}
.kbd { width: 29px; height: 15px; margin-right: auto; }
.wifi { width: 43px; height: 32px; margin-right: 5px; }
.sim { width: 28px; height: 32px; margin-right: 16px; }
.signal { width: 32px; height: 32px; margin-right: 5px; }
.boxed { width: 37px; height: 38px; }
.percent,
.clock { padding-top: 4px; }
.percent { margin: 0 12px 0 10px; }
.battery { width: 21px; height: 32px; margin-right: 11px; }

.bar {
  display: flex;
  align-items: center;
  height: 147px;
  padding: 0 52px 2px 22px;
  background: #075e54;
  color: #fff;
}
.arrow { width: 42px; height: 42px; fill: none; stroke: #fff; stroke-width: 5; }
.avatar { width: 92px; height: 92px; margin: 0 18px 0 10px; border-radius: 50%; background: #000; flex: none; }
.who { flex: 1; display: flex; flex-direction: column; gap: 7px; padding-bottom: 3px; }
.who h1 { font-family: 'Noto Sans', sans-serif; font-size: 48px; line-height: 56px; }
.who p { padding-left: 3px; font-size: 34px; line-height: 40px; color: #e3efed; }
.actions { display: flex; align-items: center; gap: 76px; fill: #fff; }
.voice { margin-right: 6px; }
.video { width: 55px; height: 33px; }
.call { width: 47px; height: 47px; }
.more { width: 11px; height: 43px; }

.chat {
  position: relative;
  display: flex;
  flex-direction: column;
  padding: 246px 12px 12px 14px;
}
.wallpaper {
  position: absolute;
  inset: 0;
  width: 100%;
  height: 100%;
}
.doodle {
  fill: none;
  stroke: #dad8d3;
  stroke-width: 6;
  stroke-linejoin: round;
  stroke-linecap: round;
}
.bubble {
  position: relative;
  border-radius: 14px;
  box-shadow: 0 2px 2px rgba(0, 0, 0, 0.16);
}
.tail {
  position: absolute;
  top: 0;
  width: 20px;
  height: 31px;
}
time {
  font-size: 32px;
  line-height: 38px;
}
.out {
  align-self: flex-end;
  display: flex;
  align-items: flex-end;
  margin-right: 33px;
  padding: 24px 19px 9px 23px;
  background: #e1ffc7;
  border-top-right-radius: 0;
  color: #8a9c7c;
}
.out .tail { left: 100%; }
.grin { width: 86px; height: 88px; margin: 0 25px 16px 0; }
.ticks { width: 39px; height: 25px; margin: 0 0 9px 11px; fill: none; stroke: #34b7f1; stroke-width: 4; }

.in {
  align-self: flex-start;
  min-width: 345px;
  margin: 149px 0 0 32px;
  padding: 10px 11px 0;
  background: #fff;
  border-top-left-radius: 0;
}
.in .tail { right: 100%; }
blockquote {
  display: flex;
  flex-direction: column;
  align-items: flex-start;
  height: 126px;
  padding: 19px 21px;
  border: 1px solid #e6e6e6;
  border-left: 8px solid #00897b;
  border-radius: 8px;
  background: #f7f7f7;
}
blockquote strong { font-size: 37px; line-height: 40px; font-weight: 600; color: #00897b; }
blockquote span { font-size: 37px; line-height: 54px; color: #757575; }
.line {
  display: flex;
  justify-content: space-between;
  padding: 4px 5px 0 10px;
  height: 75px;
}
.line p { font-size: 44px; line-height: 54px; color: #000; }
.line time { margin-top: 24px; color: #9b9b9b; }

.jump {
  position: absolute;
  right: 31px;
  bottom: 184px;
  display: grid;
  place-items: center;
  width: 86px;
  height: 86px;
  border-radius: 50%;
  background: rgba(250, 250, 249, 0.95);
  box-shadow: 0 1px 3px rgba(0, 0, 0, 0.2);
}
.jump svg { width: 32px; height: 28px; margin-top: 8px; fill: none; stroke: #8a9296; stroke-width: 4; }

.composer {
  position: relative;
  display: flex;
  align-items: center;
  gap: 14px;
  margin-top: 16px;
}
.pill {
  flex: 1;
  min-width: 0;
  display: flex;
  align-items: center;
  height: 118px;
  padding: 0 33px 0 28px;
  border-radius: 59px;
  background: #fff;
  box-shadow: 0 2px 2px rgba(0, 0, 0, 0.18);
  fill: #868e94;
}
.emoji { width: 56px; height: 56px; }
.pill input {
  flex: 1;
  min-width: 0;
  height: 64px;
  margin-left: 29px;
  padding: 4px 0 0;
  border: 0;
  outline: 0;
  background: linear-gradient(#00897b, #00897b) no-repeat 0 0 / 5px 64px;
  font: 47px/60px Roboto, sans-serif;
  color: #000;
}
.pill input::placeholder { color: #cbcbcb; opacity: 1; }
.clip { width: 55px; height: 50px; margin-right: 62px; fill: none; stroke: #868e94; stroke-width: 12; stroke-linecap: round; }
.camera { width: 53px; height: 51px; }
.mic {
  display: grid;
  place-items: center;
  flex: none;
  width: 123px;
  height: 123px;
  border-radius: 50%;
  background: #00897b;
  box-shadow: 0 2px 5px rgba(0, 0, 0, 0.25);
}
.mic svg { width: 39px; height: 54px; }

.keyboard {
  display: flex;
  flex-direction: column;
  gap: 16px;
  padding-bottom: 18px;
  background: #dca2d1;
}
.tools {
  display: flex;
  justify-content: flex-end;
  align-items: center;
  gap: 48px;
  height: 100px;
  padding: 16px 24px 0 0;
}
.brush { width: 60px; height: 61px; fill: #e813bd; }
.gear { width: 60px; height: 60px; fill: none; stroke: #e813bd; stroke-width: 3; stroke-linejoin: round; }
.keys { display: flex; }
.r1 { gap: 2px; padding: 0 16px; }
.r2 { gap: 3px; padding: 0 22px; }
.r3 { gap: 1px; padding: 0 9px 0 10px; }
.r4 { gap: 6px; padding: 0 5px 0 9px; }
.key {
  position: relative;
  flex: 1 1 0;
  min-width: 0;
  display: grid;
  place-items: center;
  height: 119px;
  padding-bottom: 12px;
  border: 1px solid rgba(40, 0, 40, 0.65);
  border-radius: 16px;
  background: linear-gradient(#000 0, #0c000a 8%, #4a0440 24%, #8c0a76 50%, #cc0ea8 76%, #fb14cf 96%) border-box;
  color: #fff;
}
.key.fn {
  padding-bottom: 0;
  background: linear-gradient(#000 0, #050a00 16%, #42103a 34%, #8c1076 60%, #d010ac 82%, #fb14cf 97%) border-box;
}
.apart { margin-left: 6px; }
.glyph { font-size: 48px; line-height: 60px; }
.fn .glyph,
.space .glyph { font-size: 37px; }
.r3 .fn .glyph { padding-top: 4px; }
.key small {
  position: absolute;
  top: 16px;
  right: 14px;
  font-size: 16px;
  line-height: 20px;
}
.r3 small { right: 9px; }
.k-smile { width: 48px; height: 48px; fill: none; stroke: #fff; stroke-width: 3; }
.k-smile .solid { fill: #fff; stroke: none; }
.k-back { width: 55px; height: 42px; }
.k-send { width: 51px; height: 48px; }
.edge {
  height: 5px;
  border-top: 4px solid #7a9bc4;
  background: #ede6ee;
}
</style>
